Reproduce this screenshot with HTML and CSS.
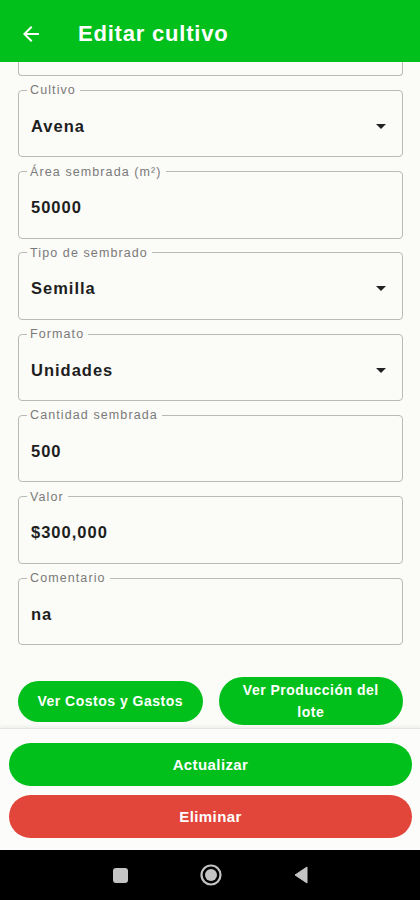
FILE: index.html
```html
<!DOCTYPE html>
<html lang="es">
<head>
    <meta charset="UTF-8">
    <meta name="viewport" content="width=device-width, initial-scale=1.0">
    <title>Editar cultivo</title>
    <link rel="stylesheet" href="styles.css">
</head>
<body>
    <div class="screen">
        <header class="app-bar">
            <svg class="back" width="24" height="24" viewBox="0 0 24 24">
                <path d="M20 11H7.83l5.59-5.59L12 4l-8 8 8 8 1.41-1.41L7.83 13H20v-2z" fill="#fff"/>
            </svg>
            <h1>Editar cultivo</h1>
        </header>

        <main class="form">
            <div class="field-stub"></div>

            <fieldset class="field">
                <legend>Cultivo</legend>
                <div class="value">Avena <span class="caret"></span></div>
            </fieldset>

            <fieldset class="field">
                <legend>Área sembrada (m²)</legend>
                <div class="value">50000</div>
            </fieldset>

            <fieldset class="field">
                <legend>Tipo de sembrado</legend>
                <div class="value">Semilla <span class="caret"></span></div>
            </fieldset>

            <fieldset class="field">
                <legend>Formato</legend>
                <div class="value">Unidades <span class="caret"></span></div>
            </fieldset>

            <fieldset class="field">
                <legend>Cantidad sembrada</legend>
                <div class="value">500</div>
            </fieldset>

            <fieldset class="field">
                <legend>Valor</legend>
                <div class="value">$300,000</div>
            </fieldset>

            <fieldset class="field">
                <legend>Comentario</legend>
                <div class="value">na</div>
            </fieldset>

            <div class="links">
                <button class="pill">Ver Costos y Gastos</button>
                <button class="pill tall">Ver Producción del lote</button>
            </div>
        </main>

        <footer class="actions">
            <button class="wide green">Actualizar</button>
            <button class="wide red">Eliminar</button>
        </footer>

        <nav class="sys-nav">
            <span class="nav-square"></span>
            <svg width="22" height="22" viewBox="0 0 22 22">
                <circle cx="11" cy="11" r="9.5" fill="none" stroke="#c4c4c4" stroke-width="2.2"/>
                <circle cx="11" cy="11" r="6" fill="#c4c4c4"/>
            </svg>
            <svg width="14" height="18" viewBox="0 0 14 18">
                <path d="M13 1v16L1 9z" fill="#c4c4c4" stroke="#c4c4c4" stroke-linejoin="round"/>
            </svg>
        </nav>
    </div>
</body>
</html>
```

FILE: styles.css
```css
* {
    margin: 0;
    padding: 0;
    box-sizing: border-box;
}

body {
    font-family: "Liberation Sans", Arial, sans-serif;
    background: #fbfbf7;
}

.screen {
    width: 420px;
    height: 900px;
    display: flex;
    flex-direction: column;
    overflow: hidden;
}

.app-bar {
    height: 62px;
    background: #02c01c;
    display: flex;
    align-items: center;
    padding: 5px 0 0 19px;
    flex-shrink: 0;
}

.app-bar h1 {
    color: white;
    font-size: 22px;
    font-weight: bold;
    letter-spacing: 0.8px;
    margin-left: 35px;
}

.form {
    flex: 1;
    padding: 0 17px 0 18px;
    display: flex;
    flex-direction: column;
    gap: 8.3px;
}

.field-stub {
    height: 14px;
    border: 1.5px solid #b9b9b9;
    border-top: none;
    border-radius: 0 0 4px 4px;
}

.field {
    height: 73px;
    border: 1.5px solid #b9b9b9;
    border-radius: 4px;
    padding: 20px 12px 0 12px;
}

.field legend {
    font-size: 12.5px;
    line-height: 12px;
    color: #7a7a7a;
    letter-spacing: 1.1px;
    padding: 0 4px 0 3px;
    margin-left: -4px;
}

.value {
    display: flex;
    justify-content: space-between;
    align-items: center;
    height: 20px;
    font-size: 16.5px;
    font-weight: bold;
    color: #1e1e1e;
    letter-spacing: 1px;
}

.caret {
    width: 0;
    height: 0;
    border-left: 5px solid transparent;
    border-right: 5px solid transparent;
    border-top: 5px solid #222;
    margin-right: 4px;
}

.links {
    display: flex;
    gap: 16px;
    align-items: center;
    margin-top: 24px;
}

.pill {
    flex: 1;
    height: 41px;
    border: none;
    border-radius: 21px;
    background: #02c01c;
    color: white;
    font-family: inherit;
    font-size: 14px;
    font-weight: bold;
    letter-spacing: 0.5px;
    line-height: 22px;
    padding: 0 12px;
}

.pill.tall {
    height: 48px;
    border-radius: 24px;
}

.actions {
    height: 122px;
    flex-shrink: 0;
    background: #fcfcfb;
    border-top: 1.5px solid #e4e4e2;
    box-shadow: 0 -2px 3px rgba(0,0,0,0.05);
    padding: 14px 8px 0 9px;
    display: flex;
    flex-direction: column;
    gap: 9px;
}

.wide {
    height: 43px;
    border: none;
    border-radius: 22px;
    color: white;
    font-family: inherit;
    font-size: 15px;
    font-weight: bold;
    letter-spacing: 0.4px;
}

.wide.green {
    background: #02c01c;
}

.wide.red {
    background: #e2463a;
}

.sys-nav {
    height: 50px;
    flex-shrink: 0;
    background: #000;
    display: flex;
    align-items: center;
    justify-content: center;
    gap: 72px;
}

.nav-square {
    width: 15px;
    height: 15px;
    background: #c4c4c4;
    border-radius: 3px;
}
```
